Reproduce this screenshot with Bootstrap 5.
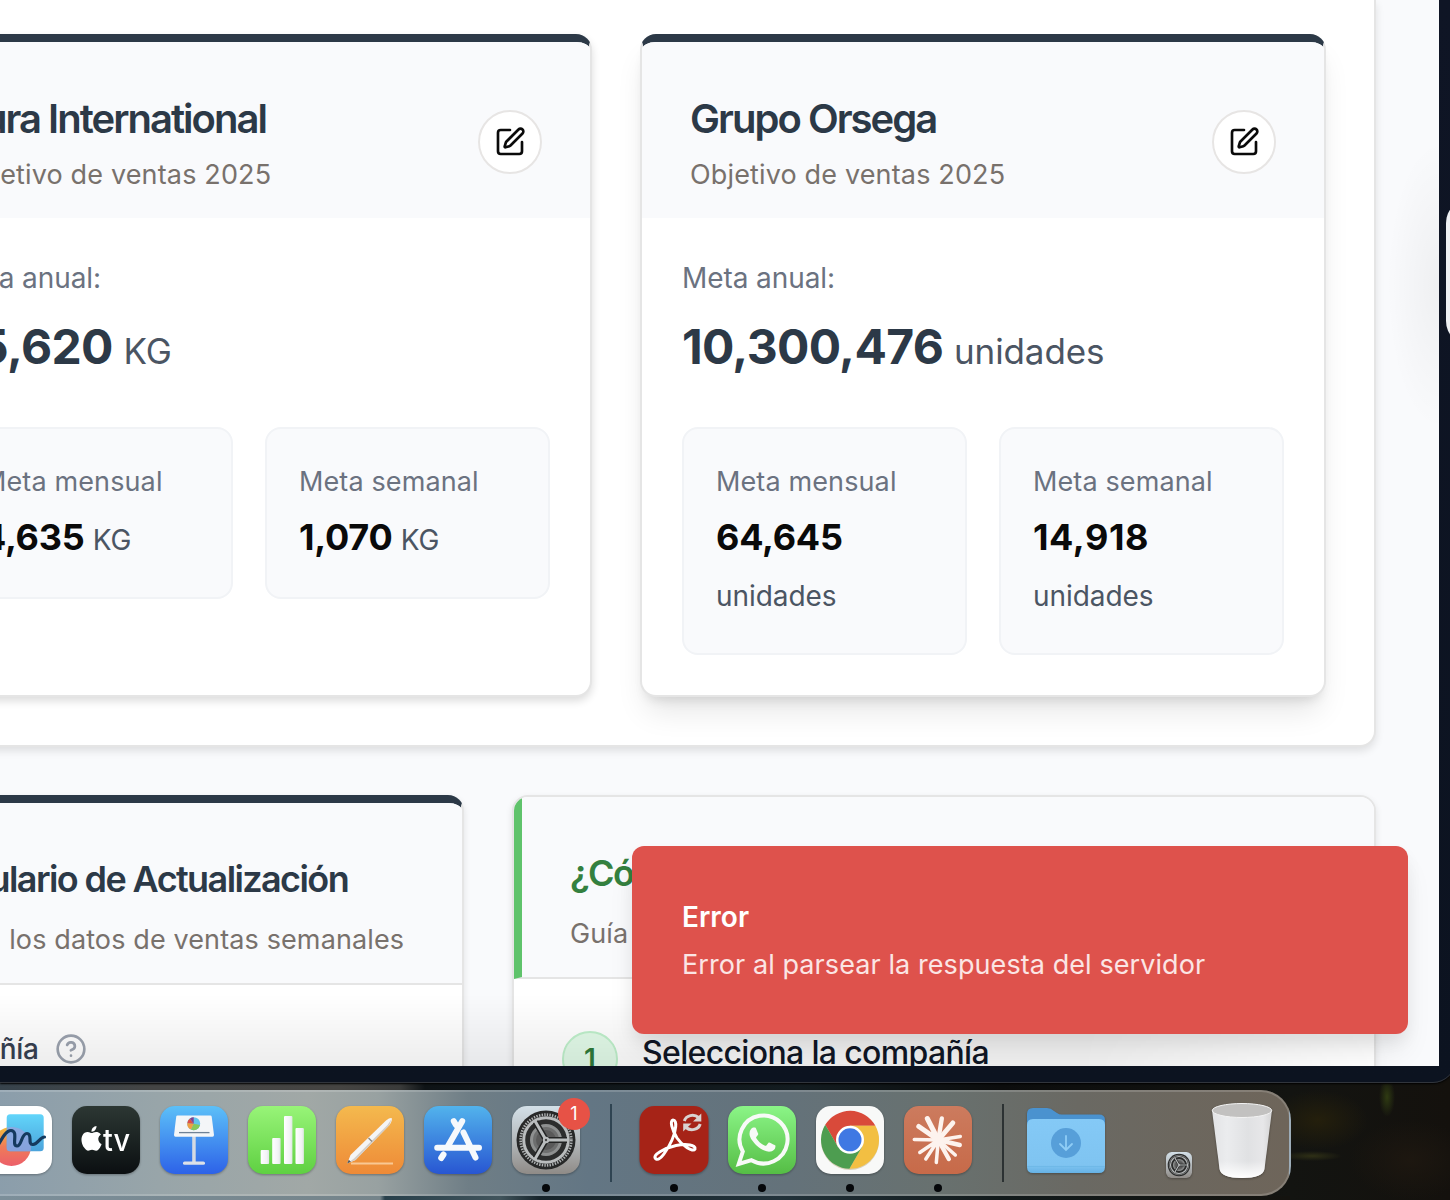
<!DOCTYPE html>
<html lang="es">
<head>
<meta charset="utf-8">
<title>Metas de ventas</title>
<link href="https://cdn.jsdelivr.net/npm/bootstrap@5.3.0/dist/css/bootstrap.min.css" rel="stylesheet">
<style>
body{margin:0;width:1450px;height:1200px;overflow:hidden;font-family:Inter,"Liberation Sans",sans-serif;color:#0a0a0a;background:#121110;font-size:28px;line-height:40px}
.desktop{width:1450px;height:1200px;overflow:hidden;background:
 radial-gradient(50px 30px at 1318px 1120px,#241f0c 0,transparent 100%),
 radial-gradient(8px 20px at 1387px 1097px,#2f3b12 0,transparent 100%),
 radial-gradient(30px 5px at 1312px 1156px,#2f3016 0,transparent 100%),
 radial-gradient(60px 40px at 1410px 1160px,#1d1710 0,transparent 100%),
 linear-gradient(90deg,#37434c 0,#444545 150px,#454442 340px,#3a3b3a 400px,#0e1316 425px,#131c20 800px,#0c0d0d 1000px,#131411 1290px,#14110d 1450px)}
.browser{width:1455px;height:1083px;padding-bottom:17px;padding-right:16px;background:linear-gradient(#0f1525,#0c1320);border-radius:0 0 22px 0;box-shadow:inset 0 -1px 0 #31353c,0 1px 2px #000}
.viewport{width:1439px;height:1066px;background:#f9fafc;overflow:hidden}
.page-body{width:1520px;margin-left:-144px;gap:48px}
.panel{background:#fff;border:2px solid #e5e5e5;border-top:0;border-radius:0 0 16px 16px;padding:34px 48px 48px;box-shadow:0 4px 9px rgba(0,0,0,.11)}
.goals{gap:48px}
.goal{width:686px;background:#fff;border:2px solid #e5e5e5;border-top:8px solid #2c3947;border-radius:16px;box-shadow:0 4px 8px rgba(0,0,0,.14);overflow:hidden}
.goal.raised{box-shadow:0 20px 30px -6px rgba(0,0,0,.1),0 8px 12px -6px rgba(0,0,0,.13)}
.goal-head{background:#f9fafc;padding:48px 48px 24px;height:176px}
.goal-title{font-size:40px;line-height:58px;font-weight:600;letter-spacing:-1.97px;color:#2c3947;margin:0 0 6px;white-space:nowrap}
.desc{font-size:27px;line-height:42px;color:#78716c;margin:0 0 -2px;white-space:nowrap;letter-spacing:.15px}
.edit{width:64px;height:64px;border:2px solid #e7e5e4;border-radius:50%;background:#fff}
.goal-body{padding:40px}
.label-txt{color:#6b7280;white-space:nowrap;letter-spacing:-.08px}
.tile .label-txt{font-size:27px;line-height:42px;margin-bottom:-2px;letter-spacing:.12px}
.big{font-size:48px;line-height:64px;font-weight:700;letter-spacing:-.65px;color:#2c3947;margin:17px 0 48px;white-space:nowrap}
.big span{font-size:35px;line-height:1;font-weight:400;letter-spacing:-.1px;color:#4b5563}
.tiles{gap:32px}
.tile{width:285px;border:2px solid #f1f3f6;border-radius:16px;background:#f9fafc;padding:32px}
.val{font-size:36px;line-height:56px;font-weight:700;margin-top:8px;color:#0a0a0a;letter-spacing:-.25px}
.val.wide{letter-spacing:.6px}
.val span{font-size:28px;line-height:1;font-weight:400;color:#4b5563;letter-spacing:-.05px}
.lower{gap:48px}
.form-card{width:608px;height:400px;background:#fff;border:2px solid #e5e5e5;border-top:8px solid #2c3947;border-radius:16px;overflow:hidden;box-shadow:0 3px 7px rgba(0,0,0,.1)}
.guide{width:864px;height:400px;background:#fff;border:2px solid #e5e5e5;border-radius:16px;overflow:hidden;box-shadow:0 3px 7px rgba(0,0,0,.1)}
.sub-head{background:#f9fafc;padding:48px 48px 24px;border-bottom:2px solid #e5e5e5}
.sub-head .desc{letter-spacing:.12px}
.guide .sub-head{border-left:8px solid #5fc36b}
.sub-title{font-size:36px;line-height:56px;font-weight:600;letter-spacing:-1.6px;color:#2c3947;margin:0 0 12px;white-space:nowrap}
.guide .sub-title{color:#34803f}
.field{padding:44px 48px;gap:17px;font-weight:500;color:#374151;letter-spacing:-.4px}
.steps{padding:52px 48px;gap:24px}
.num{width:56px;height:56px;border-radius:50%;border:2px solid #bff0cb;background:#e2fae8;color:#2f7a3a;font-weight:600}
.step-txt{font-size:32px;line-height:43px;color:#111827;font-weight:500;letter-spacing:-.65px;white-space:nowrap}
.toast-err{left:632px;top:846px;width:776px;height:188px;background:#de524c;border-radius:12px;padding:50px;color:#fff;box-shadow:0 20px 30px -6px rgba(0,0,0,.1),0 8px 16px rgba(0,0,0,.05);z-index:3}
.toast-err b{font-weight:600;display:block;line-height:42px}
.toast-err div{margin-top:7px;line-height:40px;font-size:27px;letter-spacing:.08px;color:#fbe5e4;white-space:nowrap}
.shade{left:0;right:0;bottom:0;height:72px;background:linear-gradient(transparent,rgba(0,0,0,.07));z-index:2;-webkit-mask-image:linear-gradient(90deg,#000 75%,transparent 97%);mask-image:linear-gradient(90deg,#000 75%,transparent 97%)}
.glow{right:0;top:140px;width:52px;height:290px;background:radial-gradient(52px 145px at 100% 50%,rgba(0,0,0,.045),transparent)}
.side-win{left:1446px;top:199px;width:60px;height:146px;border-radius:24px;background:#eef0f3}
.dock{width:1305px;height:106px;margin:7px 0 0 -14px;border:2px solid rgba(255,255,255,.17);border-radius:0 30px 30px 0;background:linear-gradient(90deg,#8a9dab 0,#98a5a9 170px,#a1a8a6 320px,#98a1a1 390px,#6f7e86 480px,#637684 600px,#64727a 800px,#68716f 950px,#6a6963 1090px,#6e655a 1300px);padding:14px 0 0 0;gap:20px}
.dock .app{width:68px;height:68px;flex:none;position:relative}
.dock svg{display:block;overflow:visible}
.dock .app>svg{filter:drop-shadow(0 1px 1px rgba(0,0,0,.3))}
.run::after{content:"";position:absolute;left:30px;top:78px;width:8px;height:8px;border-radius:50%;background:#05070a}
.bar-sep{width:2px;height:78px;background:#2f4452;margin:-2px 8px 0 10px;flex:none}
.note{left:46px;top:-8px;width:32px;height:32px;border-radius:50%;background:#e75246;color:#fff;font-size:18px;line-height:32px}
.under{width:1290px;height:4px;background:linear-gradient(90deg,#7c8f9a 0,#75848a 380px,#28404b 385px,#41545c 500px,#16242b 540px,#22323a 780px,#121a1b 1000px,#14130f 1290px)}
</style>
</head>
<body>
<div class="desktop d-flex flex-column position-relative">
 <div class="browser flex-shrink-0">
  <div class="viewport position-relative">
   <div class="page-body d-flex flex-column">
    <section class="panel">
     <div class="goals d-flex">
      <article class="goal flex-shrink-0">
       <div class="goal-head d-flex justify-content-between align-items-center">
        <div><h2 class="goal-title">Dura International</h2><p class="desc">Objetivo de ventas 2025</p></div>
        <button class="edit d-flex align-items-center justify-content-center p-0" aria-label="Editar"><svg width="32" height="32" viewBox="0 0 24 24" fill="none" stroke="#0a0a0a" stroke-width="2" stroke-linecap="round" stroke-linejoin="round"><path d="M12 3H5a2 2 0 0 0-2 2v14a2 2 0 0 0 2 2h14a2 2 0 0 0 2-2v-7"/><path d="M18.375 2.625a1 1 0 0 1 3 3l-9.013 9.014a2 2 0 0 1-.853.505l-2.873.84a.5.5 0 0 1-.62-.62l.84-2.873a2 2 0 0 1 .506-.852z"/></svg></button>
       </div>
       <div class="goal-body">
        <div class="label-txt">Meta anual:</div>
        <div class="big">55,620 <span>KG</span></div>
        <div class="tiles d-flex align-items-start">
         <div class="tile"><div class="label-txt">Meta mensual</div><div class="val">4,635 <span>KG</span></div></div>
         <div class="tile"><div class="label-txt">Meta semanal</div><div class="val">1,070 <span>KG</span></div></div>
        </div>
       </div>
      </article>
      <article class="goal raised flex-shrink-0">
       <div class="goal-head d-flex justify-content-between align-items-center">
        <div><h2 class="goal-title">Grupo Orsega</h2><p class="desc">Objetivo de ventas 2025</p></div>
        <button class="edit d-flex align-items-center justify-content-center p-0" aria-label="Editar"><svg width="32" height="32" viewBox="0 0 24 24" fill="none" stroke="#0a0a0a" stroke-width="2" stroke-linecap="round" stroke-linejoin="round"><path d="M12 3H5a2 2 0 0 0-2 2v14a2 2 0 0 0 2 2h14a2 2 0 0 0 2-2v-7"/><path d="M18.375 2.625a1 1 0 0 1 3 3l-9.013 9.014a2 2 0 0 1-.853.505l-2.873.84a.5.5 0 0 1-.62-.62l.84-2.873a2 2 0 0 1 .506-.852z"/></svg></button>
       </div>
       <div class="goal-body">
        <div class="label-txt">Meta anual:</div>
        <div class="big">10,300,476 <span>unidades</span></div>
        <div class="tiles d-flex align-items-start">
         <div class="tile"><div class="label-txt">Meta mensual</div><div class="val">64,645 <br><span>unidades</span></div></div>
         <div class="tile"><div class="label-txt">Meta semanal</div><div class="val wide">14,918 <br><span>unidades</span></div></div>
        </div>
       </div>
      </article>
     </div>
    </section>
    <div class="lower d-flex">
     <section class="form-card flex-shrink-0">
      <div class="sub-head"><h3 class="sub-title">Formulario de Actualización</h3><p class="desc">Ingresa los datos de ventas semanales</p></div>
      <div class="field d-flex align-items-center"><span>Compañía</span><svg width="32" height="32" viewBox="0 0 24 24" fill="none" stroke="#9ca3af" stroke-width="2" stroke-linecap="round" stroke-linejoin="round"><circle cx="12" cy="12" r="10"/><path d="M9.09 9a3 3 0 0 1 5.83 1c0 2-3 3-3 3M12 17h.01"/></svg></div>
     </section>
     <section class="guide flex-shrink-0">
      <div class="sub-head"><h3 class="sub-title">¿Có</h3><p class="desc">Guía</p></div>
      <div class="steps d-flex"><span class="num d-flex align-items-center justify-content-center">1</span><span class="step-txt">Selecciona la compañía</span></div>
     </section>
    </div>
   </div>
   <div class="glow position-absolute"></div>
   <div class="shade position-absolute"></div>
   <div class="toast-err position-absolute"><b>Error</b><div>Error al parsear la respuesta del servidor</div></div>
  </div>
 </div>
 <div class="side-win position-absolute"></div>
 <nav class="dock d-flex flex-shrink-0">
  <svg width="0" height="0" class="position-absolute"><defs>
   <linearGradient id="gTv" x2="0" y2="1"><stop stop-color="#2c3733"/><stop offset="1" stop-color="#0b0f11"/></linearGradient>
   <linearGradient id="gKey" x2="0" y2="1"><stop stop-color="#5cc0f8"/><stop offset="1" stop-color="#2d62e8"/></linearGradient>
   <linearGradient id="gNum" x2="0" y2="1"><stop stop-color="#98f478"/><stop offset="1" stop-color="#5fd042"/></linearGradient>
   <linearGradient id="gPag" x2="0" y2="1"><stop stop-color="#f4b94e"/><stop offset="1" stop-color="#ee8a37"/></linearGradient>
   <linearGradient id="gApp" x2="0" y2="1"><stop stop-color="#52b3ec"/><stop offset="1" stop-color="#2856d2"/></linearGradient>
   <linearGradient id="gSet" x2="0" y2="1"><stop stop-color="#d3e0e8"/><stop offset=".5" stop-color="#b5babd"/><stop offset="1" stop-color="#8f8b87"/></linearGradient>
   <linearGradient id="gWa" x2="0" y2="1"><stop stop-color="#8bf587"/><stop offset="1" stop-color="#55bd45"/></linearGradient>
   <linearGradient id="gCl" x2="0" y2="1"><stop stop-color="#cc7b5e"/><stop offset="1" stop-color="#c76a49"/></linearGradient>
   <linearGradient id="gBar"><stop stop-color="#fff"/><stop offset=".7" stop-color="#f2f3f5"/><stop offset="1" stop-color="#dfe7e3"/></linearGradient>
   <linearGradient id="gSq" x2="0" y2="1"><stop stop-color="#62d5fa"/><stop offset="1" stop-color="#4ba3db"/></linearGradient>
   <linearGradient id="gBall" x2="0" y2="1"><stop stop-color="#f5bd3c"/><stop offset=".5" stop-color="#ef7c58"/><stop offset="1" stop-color="#ec5f6a"/></linearGradient>
   <linearGradient id="gFo" x2="0" y2="1"><stop stop-color="#84c9f6"/><stop offset=".85" stop-color="#7fc4f1"/><stop offset="1" stop-color="#66b2e5"/></linearGradient>
   <linearGradient id="gTr" x2="1"><stop stop-color="#e2e3e5"/><stop offset=".25" stop-color="#ebecee"/><stop offset=".6" stop-color="#e0e1e3"/><stop offset=".85" stop-color="#e7e7e9"/><stop offset="1" stop-color="#d4d4d5"/></linearGradient>
   <linearGradient id="gTrB" x2="0" y2="1"><stop offset=".75" stop-color="#fff" stop-opacity="0"/><stop offset="1" stop-color="#fff"/></linearGradient>
   <g id="gear">
    <rect width="68" height="68" rx="15" fill="url(#gSet)"/>
    <circle cx="34" cy="34" r="29.5" fill="#272828"/>
    <circle cx="34" cy="34" r="25.2" fill="none" stroke="#aeb1b2" stroke-width="3" stroke-dasharray="1.4 1.24"/>
    <circle cx="34" cy="34" r="24" fill="#2c2d2d"/>
    <circle cx="34" cy="34" r="14.5" fill="#6d6e6e" stroke="#8e9090" stroke-width="3"/>
    <circle cx="34" cy="34" r="10" fill="#595959"/>
    <circle cx="34" cy="34" r="22.3" fill="none" stroke="#b9bcbd" stroke-width="3"/>
    <path d="M34 34H55M34 34L23.5 15.8M34 34L23.5 52.2" stroke="#232424" stroke-width="6"/>
    <path d="M34 34H56M34 34L23 15M34 34L23 53" stroke="#babdbe" stroke-width="3"/>
    <circle cx="34" cy="34" r="3.2" fill="#babdbe"/><circle cx="34" cy="34" r="1.2" fill="#444"/>
   </g></defs></svg>
  <div class="app" style="margin-left:-4px"><svg width="68" height="68"><rect width="68" height="68" rx="15" fill="#fff"/><circle cx="27.5" cy="40.5" r="19.5" fill="url(#gBall)"/><rect x="22.7" y="8.3" width="37" height="37" rx="3.5" fill="url(#gSq)"/><path d="M23 21.500A19.500 19.500 0 0 1 46.500 45.300H26Q22.700 45.300 22.700 42z" fill="#9aa2dc" opacity=".75"/><path d="M10 44C15 41 20 24 27 24.500C35 25 27 40 33 40C38 40 37 27.500 43 27.500C49 27.500 43 39 49 38.500C54 38 56 31 60.500 31" fill="none" stroke="#153a5e" stroke-width="3.200" stroke-linecap="round"/></svg></div>
  <div class="app"><svg width="68" height="68"><rect width="68" height="68" rx="15" fill="url(#gTv)"/><path transform="translate(7.200 20) scale(1.030)" fill="#fff" d="M12.152 6.896c-.948 0-2.415-1.078-3.96-1.04-2.04.027-3.91 1.183-4.961 3.014-2.117 3.675-.546 9.103 1.519 12.09 1.013 1.454 2.208 3.09 3.792 3.039 1.52-.065 2.09-.987 3.935-.987 1.831 0 2.35.987 3.96.948 1.637-.026 2.676-1.48 3.676-2.948 1.156-1.688 1.636-3.325 1.662-3.415-.039-.013-3.182-1.221-3.22-4.857-.026-3.04 2.48-4.494 2.597-4.559-1.429-2.09-3.623-2.324-4.39-2.376-2-.156-3.675 1.09-4.61 1.09zM15.53 3.83c.843-1.012 1.4-2.427 1.245-3.83-1.207.052-2.662.805-3.532 1.818-.78.896-1.454 2.338-1.273 3.714 1.338.104 2.715-.688 3.559-1.701"/><text x="31" y="44.500" font-size="31" font-weight="500" fill="#fff" textLength="27" lengthAdjust="spacingAndGlyphs">tv</text></svg></div>
  <div class="app"><svg width="68" height="68"><rect width="68" height="68" rx="15" fill="url(#gKey)"/><rect x="32.200" y="30" width="3.500" height="27" fill="#d5dae2"/><rect x="23" y="55.500" width="22" height="3.300" rx="1.600" fill="#dde1e8"/><path d="M17.500 9.500H50.300Q51.500 9.500 51.700 10.700L54 29Q54 30.800 52.500 30.800H15.500Q14 30.800 14 29L16.200 10.700Q16.400 9.500 17.500 9.500z" fill="#f4f6f8"/><path d="M19 26.600H49.500" stroke="#6f8296" stroke-width="1.300"/><circle cx="33.700" cy="17.700" r="6.500" fill="#62c4ee"/><path d="M33.700 17.700L40 19A6.500 6.500 0 0 1 31 23.600z" fill="#86c95b"/><path d="M33.700 17.700L31 23.600A6.500 6.500 0 0 1 27.300 17z" fill="#f0a042"/><path d="M33.700 17.700L27.300 17A6.500 6.500 0 0 1 30 12.400z" fill="#dd4e48"/><path d="M33.700 17.700L30 12.400A6.500 6.500 0 0 1 33.700 11.200z" fill="#83418f"/></svg></div>
  <div class="app"><svg width="68" height="68"><rect width="68" height="68" rx="15" fill="url(#gNum)"/><g fill="url(#gBar)"><rect x="12.700" y="44" width="8.400" height="14" rx="1"/><rect x="24.200" y="32" width="8.400" height="26" rx="1"/><rect x="36" y="10" width="8.400" height="48" rx="1"/><rect x="47.500" y="22" width="8.400" height="36" rx="1"/></g></svg></div>
  <div class="app"><svg width="68" height="68"><rect width="68" height="68" rx="15" fill="url(#gPag)"/><path d="M15 57.600H57" stroke="#f9c893" stroke-width="2"/><path d="M11.200 57.500L14.500 49L50 14.500Q54 11.500 55.800 12.200Q56.500 14.500 53.500 19L19.500 54z" fill="#f5f5f5"/><path d="M11.200 57.500L19.500 54L53.500 19L55.500 13L51.500 19L18 52.500z" fill="#d4cdc6"/><path d="M11.200 57.500L12.800 53.800L14.800 55.800z" fill="#555"/><path d="M32.500 32L36 35.600" stroke="#8f8a84" stroke-width="1.400"/></svg></div>
  <div class="app"><svg width="68" height="68"><rect width="68" height="68" rx="15" fill="url(#gApp)"/><g stroke="#f6f9fc" stroke-width="6" stroke-linecap="round"><path d="M29.800 15.200L32 19M39.500 26.500L51.500 51.500M38.200 15.200L24 40M13.200 41.700H55M19.500 48.500L17.200 52"/></g></svg></div>
  <div class="app run"><svg width="68" height="68"><use href="#gear"/></svg><span class="note position-absolute text-center">1</span></div>
  <div class="bar-sep"></div>
  <div class="app run"><svg width="68" height="68"><rect x="-.5" width="69" height="68" rx="15" fill="#a62317"/><path d="M16 53C11 49 25 42 36 39.500C47 37.500 56 39 55 43C53 47 42 39.500 37 32C32 24 29.500 14.500 33 14C37.500 14 36 25 32 34C27.500 44 20 55.500 16 53z" fill="none" stroke="#fff" stroke-width="3"/><g fill="none" stroke="#d9d3d1" stroke-width="3"><path d="M44.300 15A8.500 7.500 0 0 1 58.500 11.500M60.200 18A8.500 7.500 0 0 1 46 21.500"/></g><path d="M61.300 7.500V15.500H53zM43.200 25.500V17.500H51.500z" fill="#d9d3d1"/></svg></div>
  <div class="app run"><svg width="68" height="68"><rect width="68" height="68" rx="15" fill="url(#gWa)"/><path d="M10.700 58L14.800 45.500A24 24 0 1 1 23.500 54.200z" fill="none" stroke="#f8faf8" stroke-width="4"/><path transform="translate(8.600 7.800) scale(2.150)" fill="#f8faf8" d="M17.472 14.382c-.297-.149-1.758-.867-2.03-.967-.273-.099-.471-.148-.67.15-.197.297-.767.966-.94 1.164-.173.199-.347.223-.644.075-.297-.15-1.255-.463-2.39-1.475-.883-.788-1.48-1.761-1.653-2.059-.173-.297-.018-.458.13-.606.134-.133.298-.347.446-.52.149-.174.198-.298.298-.497.099-.198.05-.371-.025-.52-.075-.149-.669-1.612-.916-2.207-.242-.579-.487-.5-.669-.51-.173-.008-.371-.01-.57-.01-.198 0-.52.074-.792.372-.272.297-1.04 1.016-1.04 2.479 0 1.462 1.065 2.875 1.213 3.074.149.198 2.096 3.2 5.077 4.487.709.306 1.262.489 1.694.625.712.227 1.36.195 1.871.118.571-.085 1.758-.719 2.006-1.413.248-.694.248-1.289.173-1.413-.074-.124-.272-.198-.57-.347z"/></svg></div>
  <div class="app run"><svg width="68" height="68"><rect width="68" height="68" rx="15" fill="#f8f9f8"/><g transform="translate(34 33.800)"><circle r="29" cy="1.200" fill="#b9a77a" opacity=".5"/><path d="M-24.800-15A29 29 0 0 1 25.400-14H0L-12.100 7z" fill="#d94a3a"/><path d="M25.400-14A29 29 0 0 1-.6 29L12.100 7L0-14z" fill="#f2bf42"/><path d="M-.6 29A29 29 0 0 1-24.800-15L-12.100 7L12.100 7z" fill="#4d9d50"/><circle r="14" fill="#fff"/><circle r="11.500" fill="#3f78e3"/></g></svg></div>
  <div class="app run"><svg width="68" height="68"><rect width="68" height="68" rx="15" fill="url(#gCl)"/><g transform="translate(34.300 34)" stroke="#fdf3ee" stroke-linecap="round"><path stroke-width="5" d="M0 0L-11-21.500M0 0L14.500-17M0 0L-19.500-13.500"/><path stroke-width="4.400" d="M0 0L3.500-21.500M0 0L21.500 5M0 0L10.500 19"/><path stroke-width="3.500" d="M0 0L22-3.500M0 0L-2 22.500M0 0L-12.500 19M0 0L-18.500 12.500M0 0L-24-.5M0 0L17 15"/><circle r="5.500" fill="#fdf3ee" stroke="none"/></g></svg></div>
  <div class="bar-sep" style="background:#2c3233"></div>
  <div class="app" style="width:78px;margin-left:-5px"><svg width="78" height="68"><path d="M0 8Q0 2 6 2H20Q24 2 27 5L30 7Q32 8.500 35 8.500H72Q78 8.500 78 14V30H0z" fill="#4a92cf"/><path d="M0 19Q0 13 6 13H72Q78 13 78 19V61Q78 67 72 67H6Q0 67 0 61z" fill="url(#gFo)"/><path d="M0 60.500H78" stroke="#6fb9e8" stroke-width="1"/><circle cx="39" cy="37" r="15" fill="#579fd9"/><path d="M39 30V43.500M33 38L39 44L45 38" fill="none" stroke="#8fcdf6" stroke-width="1.800" stroke-linecap="round"/></svg></div>
  <div class="app" style="width:26px;margin:46px 0 0 41px;height:26px"><svg width="26" height="26" viewBox="0 0 68 68"><use href="#gear"/></svg></div>
  <div class="app" style="width:60px;height:76px;margin-top:-3px"><svg width="60" height="76"><path d="M0 7L7.500 66Q9 75 30 75Q51 75 52.500 66L60 7z" fill="url(#gTr)"/><path d="M0 7L7.500 66Q9 75 30 75Q51 75 52.500 66L60 7z" fill="url(#gTrB)"/><ellipse cx="30" cy="7.500" rx="29.700" ry="7" fill="#c2c1c0" stroke="#f3f3f3" stroke-width="1"/></svg></div>
 </nav>
 <div class="under"></div>
</div>
<script src="https://cdn.jsdelivr.net/npm/bootstrap@5.3.0/dist/js/bootstrap.bundle.min.js"></script>
</body>
</html>
